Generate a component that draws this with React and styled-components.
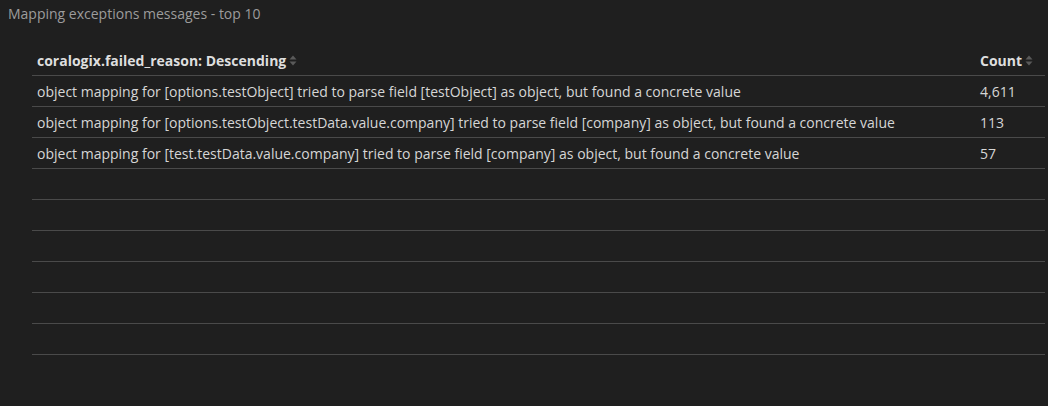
import React from "react";
import styled, { createGlobalStyle } from "styled-components";

const Global = createGlobalStyle`
  html, body { margin: 0; padding: 0; background: #1f1f1f; }
  body { font-family: "Open Sans", "Liberation Sans", sans-serif; }
`;

const Panel = styled.div`
  width: 1048px;
  height: 406px;
  background: #1f1f1f;
  box-sizing: border-box;
  padding: 4px 0 0 0;
`;

const Title = styled.div`
  font-size: 14px;
  line-height: 19px;
  color: #9c9c9c;
  padding-left: 8px;
`;

const Table = styled.table`
  margin: 22px 0 0 32px;
  width: 1013px;
  border-collapse: collapse;
  font-size: 14px;
`;

const Th = styled.th`
  text-align: left;
  font-weight: 700;
  color: #dedede;
  height: 30px;
  padding: 0 5px;
  border-bottom: 1px solid #4a4a4a;
  width: ${(p) => (p.$narrow ? "60px" : "auto")};
  white-space: nowrap;
`;

const Td = styled.td`
  color: #d6d6d6;
  height: 30px;
  padding: 0 5px;
  border-bottom: 1px solid #4a4a4a;
  white-space: nowrap;
`;

const SortIcon = styled.svg`
  display: inline-block;
  vertical-align: middle;
  margin-left: 3px;
  margin-top: -2px;
`;

const Sort = () => (
  <SortIcon width="8" height="11" viewBox="0 0 8 11">
    <path d="M4 0.5 L7.5 4.5 L0.5 4.5 Z" fill="#5a5a5a" />
    <path d="M4 10.5 L7.5 6.5 L0.5 6.5 Z" fill="#5a5a5a" />
  </SortIcon>
);

const rows = [
  ["object mapping for [options.testObject] tried to parse field [testObject] as object, but found a concrete value", "4,611"],
  ["object mapping for [options.testObject.testData.value.company] tried to parse field [company] as object, but found a concrete value", "113"],
  ["object mapping for [test.testData.value.company] tried to parse field [company] as object, but found a concrete value", "57"],
];

export default function App() {
  const empty = Array.from({ length: 6 });
  return (
    <Panel>
      <Global />
      <Title>Mapping exceptions messages - top 10</Title>
      <Table>
        <thead>
          <tr>
            <Th>coralogix.failed_reason: Descending<Sort /></Th>
            <Th $narrow>Count<Sort /></Th>
          </tr>
        </thead>
        <tbody>
          {rows.map(([r, c], i) => (
            <tr key={i}>
              <Td>{r}</Td>
              <Td>{c}</Td>
            </tr>
          ))}
          {empty.map((_, i) => (
            <tr key={"e" + i}>
              <Td />
              <Td />
            </tr>
          ))}
        </tbody>
      </Table>
    </Panel>
  );
}
